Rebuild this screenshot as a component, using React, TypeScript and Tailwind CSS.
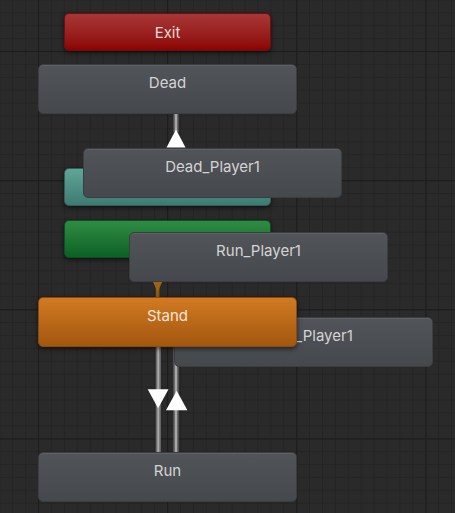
import React from "react";

type NodeProps = {
  label: string;
  pos: string;
  look: string;
  text: string;
  tall?: boolean;
};

function StateNode({ label, pos, look, text, tall = true }: NodeProps) {
  return (
    <div
      className={`absolute ${pos} ${look} rounded-[5px] shadow-[0_2px_5px_rgba(0,0,0,0.55)] flex justify-center ${
        tall ? "items-start pt-[8px]" : "items-center"
      }`}
    >
      <span className={`${text} text-[15px] leading-[19px] whitespace-nowrap`}>{label}</span>
    </div>
  );
}

function Edges() {
  return (
    <svg className="absolute inset-0" width="455" height="513" viewBox="0 0 455 513">
      {/* Dead_Player1 -> Dead */}
      <rect x="173.5" y="112" width="5" height="20" fill="#6a6a6a" />
      <rect x="175" y="112" width="2" height="20" fill="#a8a8a8" />
      <polygon points="176,129.5 166.5,147.5 185.5,147.5" fill="#ffffff" />

      {/* Run_Player1 -> Stand (highlighted) */}
      <rect x="155.8" y="280" width="3.6" height="18" fill="#8a5a14" />
      <polygon points="152.8,281.5 162.3,281.5 157.6,292" fill="#9c6516" />

      {/* Stand -> Run */}
      <rect x="155.7" y="345" width="5.2" height="109" fill="#6a6a6a" />
      <rect x="157.3" y="345" width="2" height="109" fill="#a8a8a8" />
      <polygon points="147.7,389.3 168.5,389.3 158.1,408.3" fill="#ffffff" />

      {/* Run -> Stand */}
      <rect x="173.4" y="345" width="5.2" height="109" fill="#6a6a6a" />
      <rect x="175" y="345" width="2" height="109" fill="#a8a8a8" />
      <polygon points="176.7,390.7 166,410.3 187.4,410.3" fill="#ffffff" />
    </svg>
  );
}

export default function App() {
  const gray =
    "bg-gradient-to-b from-[#515458] to-[#45484c] border border-[#3b3d40] shadow-[inset_0_1px_0_#5e6165]";
  const grayText = "text-[#d4d4d4]";
  return (
    <div
      className="relative w-[455px] h-[513px] overflow-hidden bg-[#2a2a2a] [background-image:linear-gradient(to_right,#1c1c1c_1px,transparent_1px),linear-gradient(to_bottom,#1c1c1c_1px,transparent_1px),linear-gradient(to_right,#242424_1px,transparent_1px),linear-gradient(to_bottom,#242424_1px,transparent_1px)] [background-size:129.2px_129.2px,129.2px_129.2px,12.92px_12.92px,12.92px_12.92px] [background-position:38px_51px,38px_51px,38px_51px,38px_51px]"
      style={{ fontFamily: "Inter, 'Noto Sans', 'DejaVu Sans', sans-serif" }}
    >
      <Edges />

      <StateNode
        label="Exit"
        pos="left-[64px] top-[13px] w-[207px] h-[38px]"
        look="bg-gradient-to-b from-[#a83636] to-[#8b0202] border border-[#6e1010]"
        text="text-[#ecdada]"
        tall={false}
      />
      <StateNode label="Dead" pos="left-[38px] top-[64px] w-[259px] h-[50px]" look={gray} text={grayText} />

      <StateNode
        label="Any State"
        pos="left-[64px] top-[168px] w-[207px] h-[38px]"
        look="bg-gradient-to-b from-[#60a696] to-[#3e7a72] border border-[#2f5f58]"
        text="text-[#e4eeec]"
        tall={false}
      />
      <StateNode
        label="Entry"
        pos="left-[64px] top-[220px] w-[207px] h-[38px]"
        look="bg-gradient-to-b from-[#2f8c42] to-[#0b6126] border border-[#0d4f20]"
        text="text-[#e0eee2]"
        tall={false}
      />

      <StateNode label="Dead_Player1" pos="left-[83px] top-[148px] w-[259px] h-[50px]" look={gray} text={grayText} />
      <StateNode label="Run_Player1" pos="left-[129px] top-[232px] w-[259px] h-[50px]" look={gray} text={grayText} />
      <StateNode label="Stand_Player1" pos="left-[174px] top-[317px] w-[259px] h-[50px]" look={gray} text={grayText} />

      <StateNode
        label="Stand"
        pos="left-[38px] top-[297px] w-[259px] h-[50px]"
        look="bg-gradient-to-b from-[#d27a22] to-[#a3570e] border border-[#8a4a10]"
        text="text-[#f3e6d8]"
      />

      <StateNode label="Run" pos="left-[38px] top-[452px] w-[259px] h-[50px]" look={gray} text={grayText} />
    </div>
  );
}
